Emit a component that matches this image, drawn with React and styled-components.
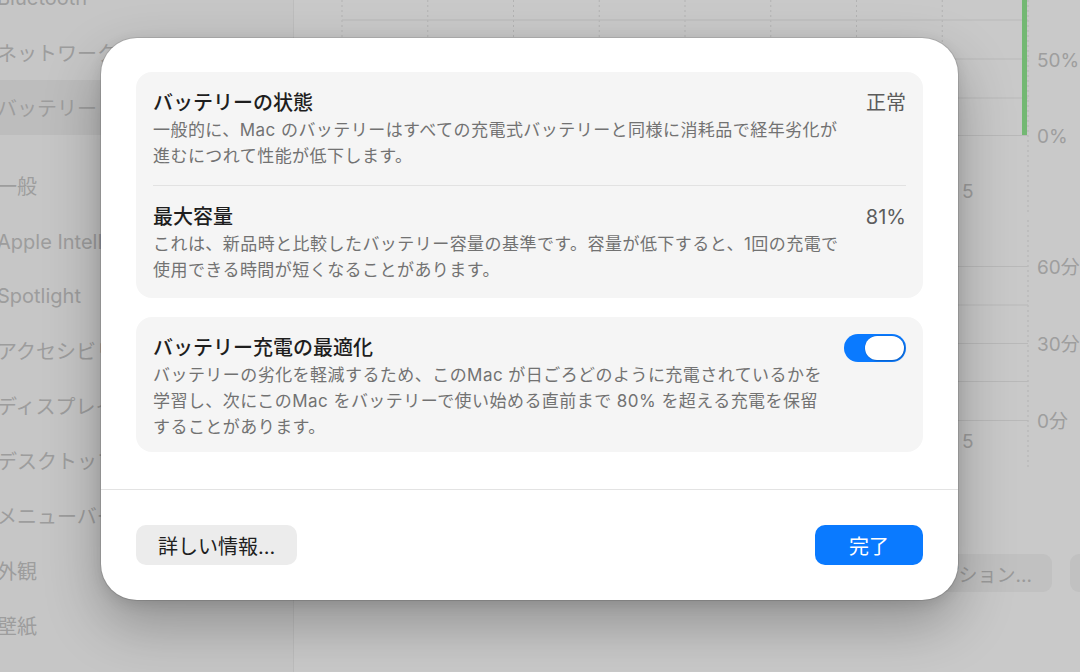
import React from "react";
import styled, { createGlobalStyle } from "styled-components";

const FONT = `"Inter", "Noto Sans CJK JP", sans-serif`;

const Global = createGlobalStyle`
  html, body { margin: 0; padding: 0; width: 1080px; height: 672px; overflow: hidden; background: #c9c9c9; }
  body { font-family: ${FONT}; -webkit-font-smoothing: antialiased; }
  * { box-sizing: border-box; }
`;

const Screen = styled.div`
  position: relative;
  width: 1080px;
  height: 672px;
  overflow: hidden;
  display: grid;
  grid-template-columns: 294px 1fr;
  background: #c9c9c9;
  font-family: ${FONT};
`;

/* ---------- dimmed settings window behind the sheet ---------- */

const Sidebar = styled.nav`
  background: #c6c6c6;
  border-right: 1px solid #bdbdbd;
  overflow: hidden;
`;

const NavList = styled.ul`
  list-style: none;
  margin: -30px 0 0 -12px;
  padding: 0;
  display: flex;
  flex-direction: column;
`;

const NavItem = styled.li`
  height: 55px;
  display: flex;
  align-items: center;
  padding-left: 9px;
  margin-top: ${(p) => (p.$gap ? "23px" : "0")};
  font-size: 20px;
  color: #9d9d9d;
  white-space: nowrap;
  border-radius: 10px;
  background: ${(p) => (p.$selected ? "#bdbdbd" : "transparent")};
`;

const Content = styled.main`
  display: flex;
  flex-direction: column;
  overflow: hidden;
`;

const ChartSvg = styled.svg`
  display: block;
  flex: none;
`;

const ButtonRow = styled.div`
  display: flex;
  justify-content: flex-end;
  gap: 18px;
  margin: 84px -60px 0 0;
`;

const GhostButton = styled.div`
  height: 38px;
  padding: 0 20px;
  min-width: ${(p) => (p.$w ? p.$w + "px" : "auto")};
  border-radius: 9px;
  background: #c1c1c1;
  color: #9a9a9a;
  font-size: 19px;
  display: flex;
  align-items: center;
  white-space: nowrap;
`;

const GX = 48;
const GSTEP = 85.75;

function UsageChart({ height, lines, labels, tick, bar, dotEnd }) {
  const xs = Array.from({ length: 9 }, (_, i) => GX + i * GSTEP);
  const textStyle = { fontFamily: FONT, fontSize: 19, fill: "#9e9e9e" };
  return (
    <ChartSvg width={786} height={height} viewBox={`0 0 786 ${height}`}>
      {xs.map((x) => (
        <line key={"v" + x} x1={x} x2={x} y1={0} y2={dotEnd} stroke="#b3b3b3" strokeWidth="1" strokeDasharray="2 3" />
      ))}
      {lines.map((y) => (
        <line key={"h" + y} x1={GX} x2={GX + 8 * GSTEP} y1={y} y2={y} stroke="#b9b9b9" strokeWidth="1" />
      ))}
      {bar ? <rect x={728} y={0} width={5} height={bar} fill="#73b873" /> : null}
      {labels.map((l) => (
        <text key={l.t} x={743} y={l.y} dominantBaseline="central" style={textStyle}>
          {l.t}
        </text>
      ))}
      <text x={668} y={tick} dominantBaseline="central" style={textStyle}>
        5
      </text>
    </ChartSvg>
  );
}

/* ---------- sheet ---------- */

const Sheet = styled.section`
  position: absolute;
  left: 101px;
  top: 38px;
  width: 857px;
  height: 562px;
  background: #ffffff;
  border-radius: 36px;
  box-shadow: 0 0 0 1px rgba(0, 0, 0, 0.1), 0 24px 56px rgba(0, 0, 0, 0.28), 0 4px 14px rgba(0, 0, 0, 0.1);
  display: flex;
  flex-direction: column;
  overflow: hidden;
`;

const SheetBody = styled.div`
  flex: 1;
  padding: 34px 35px 0 35px;
  display: flex;
  flex-direction: column;
  gap: 19px;
`;

const Card = styled.div`
  background: #f5f5f5;
  border-radius: 16px;
  padding: 0 17px;
`;

const Row = styled.div`
  display: flex;
  align-items: flex-start;
  gap: 20px;
  padding: 18px 0 ${(p) => p.$pb || 17}px;
`;

const RowText = styled.div`
  flex: 1;
  min-width: 0;
`;

const RowTitle = styled.div`
  font-size: 20px;
  line-height: 27px;
  font-weight: 500;
  color: #1e1e1e;
`;

const RowDesc = styled.div`
  font-size: 17px;
  line-height: 26px;
  letter-spacing: 0.45px;
  color: #727272;
  white-space: nowrap;
`;

const RowValue = styled.div`
  flex: none;
  font-size: 20px;
  line-height: 27px;
  color: #5c5c5c;
`;

const Divider = styled.div`
  height: 1px;
  background: #e2e2e2;
`;

const Toggle = styled.div`
  flex: none;
  width: 62px;
  height: 28px;
  margin-top: -1px;
  padding: 2px;
  border-radius: 14px;
  background: #0a7aff;
  display: flex;
  justify-content: flex-end;
  align-items: center;
`;

const Knob = styled.span`
  width: 39px;
  height: 24px;
  border-radius: 12px;
  background: #ffffff;
  box-shadow: 0 0 0 0.5px rgba(0, 0, 0, 0.12), 1px 1px 2px rgba(0, 0, 0, 0.18);
`;

const SheetFooter = styled.footer`
  flex: none;
  border-top: 1px solid #e3e3e3;
  padding: 35px 35px 35px 35px;
  display: flex;
  justify-content: space-between;
  align-items: center;
`;

const Button = styled.button`
  height: 40px;
  padding: 0 ${(p) => (p.$primary ? 34 : 22)}px;
  border: none;
  border-radius: 10px;
  background: ${(p) => (p.$primary ? "#0a7aff" : "#ececec")};
  color: ${(p) => (p.$primary ? "#ffffff" : "#202020")};
  font-family: ${FONT};
  font-size: 20px;
  display: flex;
  align-items: center;
  white-space: nowrap;
`;

export default function App() {
  return (
    <>
      <Global />
      <Screen>
        <Sidebar>
          <NavList>
            <NavItem>Bluetooth</NavItem>
            <NavItem>ネットワーク</NavItem>
            <NavItem $selected>バッテリー</NavItem>
            <NavItem $gap>一般</NavItem>
            <NavItem>Apple Intelligence と Siri</NavItem>
            <NavItem>Spotlight</NavItem>
            <NavItem>アクセシビリティ</NavItem>
            <NavItem>ディスプレイ</NavItem>
            <NavItem>デスクトップと Dock</NavItem>
            <NavItem>メニューバー</NavItem>
            <NavItem>外観</NavItem>
            <NavItem>壁紙</NavItem>
          </NavList>
        </Sidebar>
        <Content>
          <UsageChart
            height={220}
            lines={[20, 59, 98, 135.5]}
            labels={[
              { t: "50%", y: 60 },
              { t: "0%", y: 136 },
            ]}
            tick={191}
            bar={135}
            dotEnd={215}
          />
          <UsageChart
            height={250}
            lines={[46.5, 85, 123.5, 161.5, 200.5]}
            labels={[
              { t: "60分", y: 47 },
              { t: "30分", y: 124 },
              { t: "0分", y: 201 },
            ]}
            tick={221}
            dotEnd={266}
          />
          <ButtonRow>
            <GhostButton>オプション...</GhostButton>
            <GhostButton $w={70}>?</GhostButton>
          </ButtonRow>
        </Content>

        <Sheet>
          <SheetBody>
            <Card>
              <Row $pb={16}>
                <RowText>
                  <RowTitle>バッテリーの状態</RowTitle>
                  <RowDesc>
                    一般的に、Mac のバッテリーはすべての充電式バッテリーと同様に消耗品で経年劣化が
                    <br />
                    進むにつれて性能が低下します。
                  </RowDesc>
                </RowText>
                <RowValue>正常</RowValue>
              </Row>
              <Divider />
              <Row $pb={15}>
                <RowText>
                  <RowTitle>最大容量</RowTitle>
                  <RowDesc>
                    これは、新品時と比較したバッテリー容量の基準です。容量が低下すると、1回の充電で
                    <br />
                    使用できる時間が短くなることがあります。
                  </RowDesc>
                </RowText>
                <RowValue>81%</RowValue>
              </Row>
            </Card>
            <Card>
              <Row $pb={12}>
                <RowText>
                  <RowTitle>バッテリー充電の最適化</RowTitle>
                  <RowDesc>
                    バッテリーの劣化を軽減するため、このMac が日ごろどのように充電されているかを
                    <br />
                    学習し、次にこのMac をバッテリーで使い始める直前まで 80% を超える充電を保留
                    <br />
                    することがあります。
                  </RowDesc>
                </RowText>
                <Toggle role="switch" aria-checked="true">
                  <Knob />
                </Toggle>
              </Row>
            </Card>
          </SheetBody>
          <SheetFooter>
            <Button>詳しい情報...</Button>
            <Button $primary>完了</Button>
          </SheetFooter>
        </Sheet>
      </Screen>
    </>
  );
}
